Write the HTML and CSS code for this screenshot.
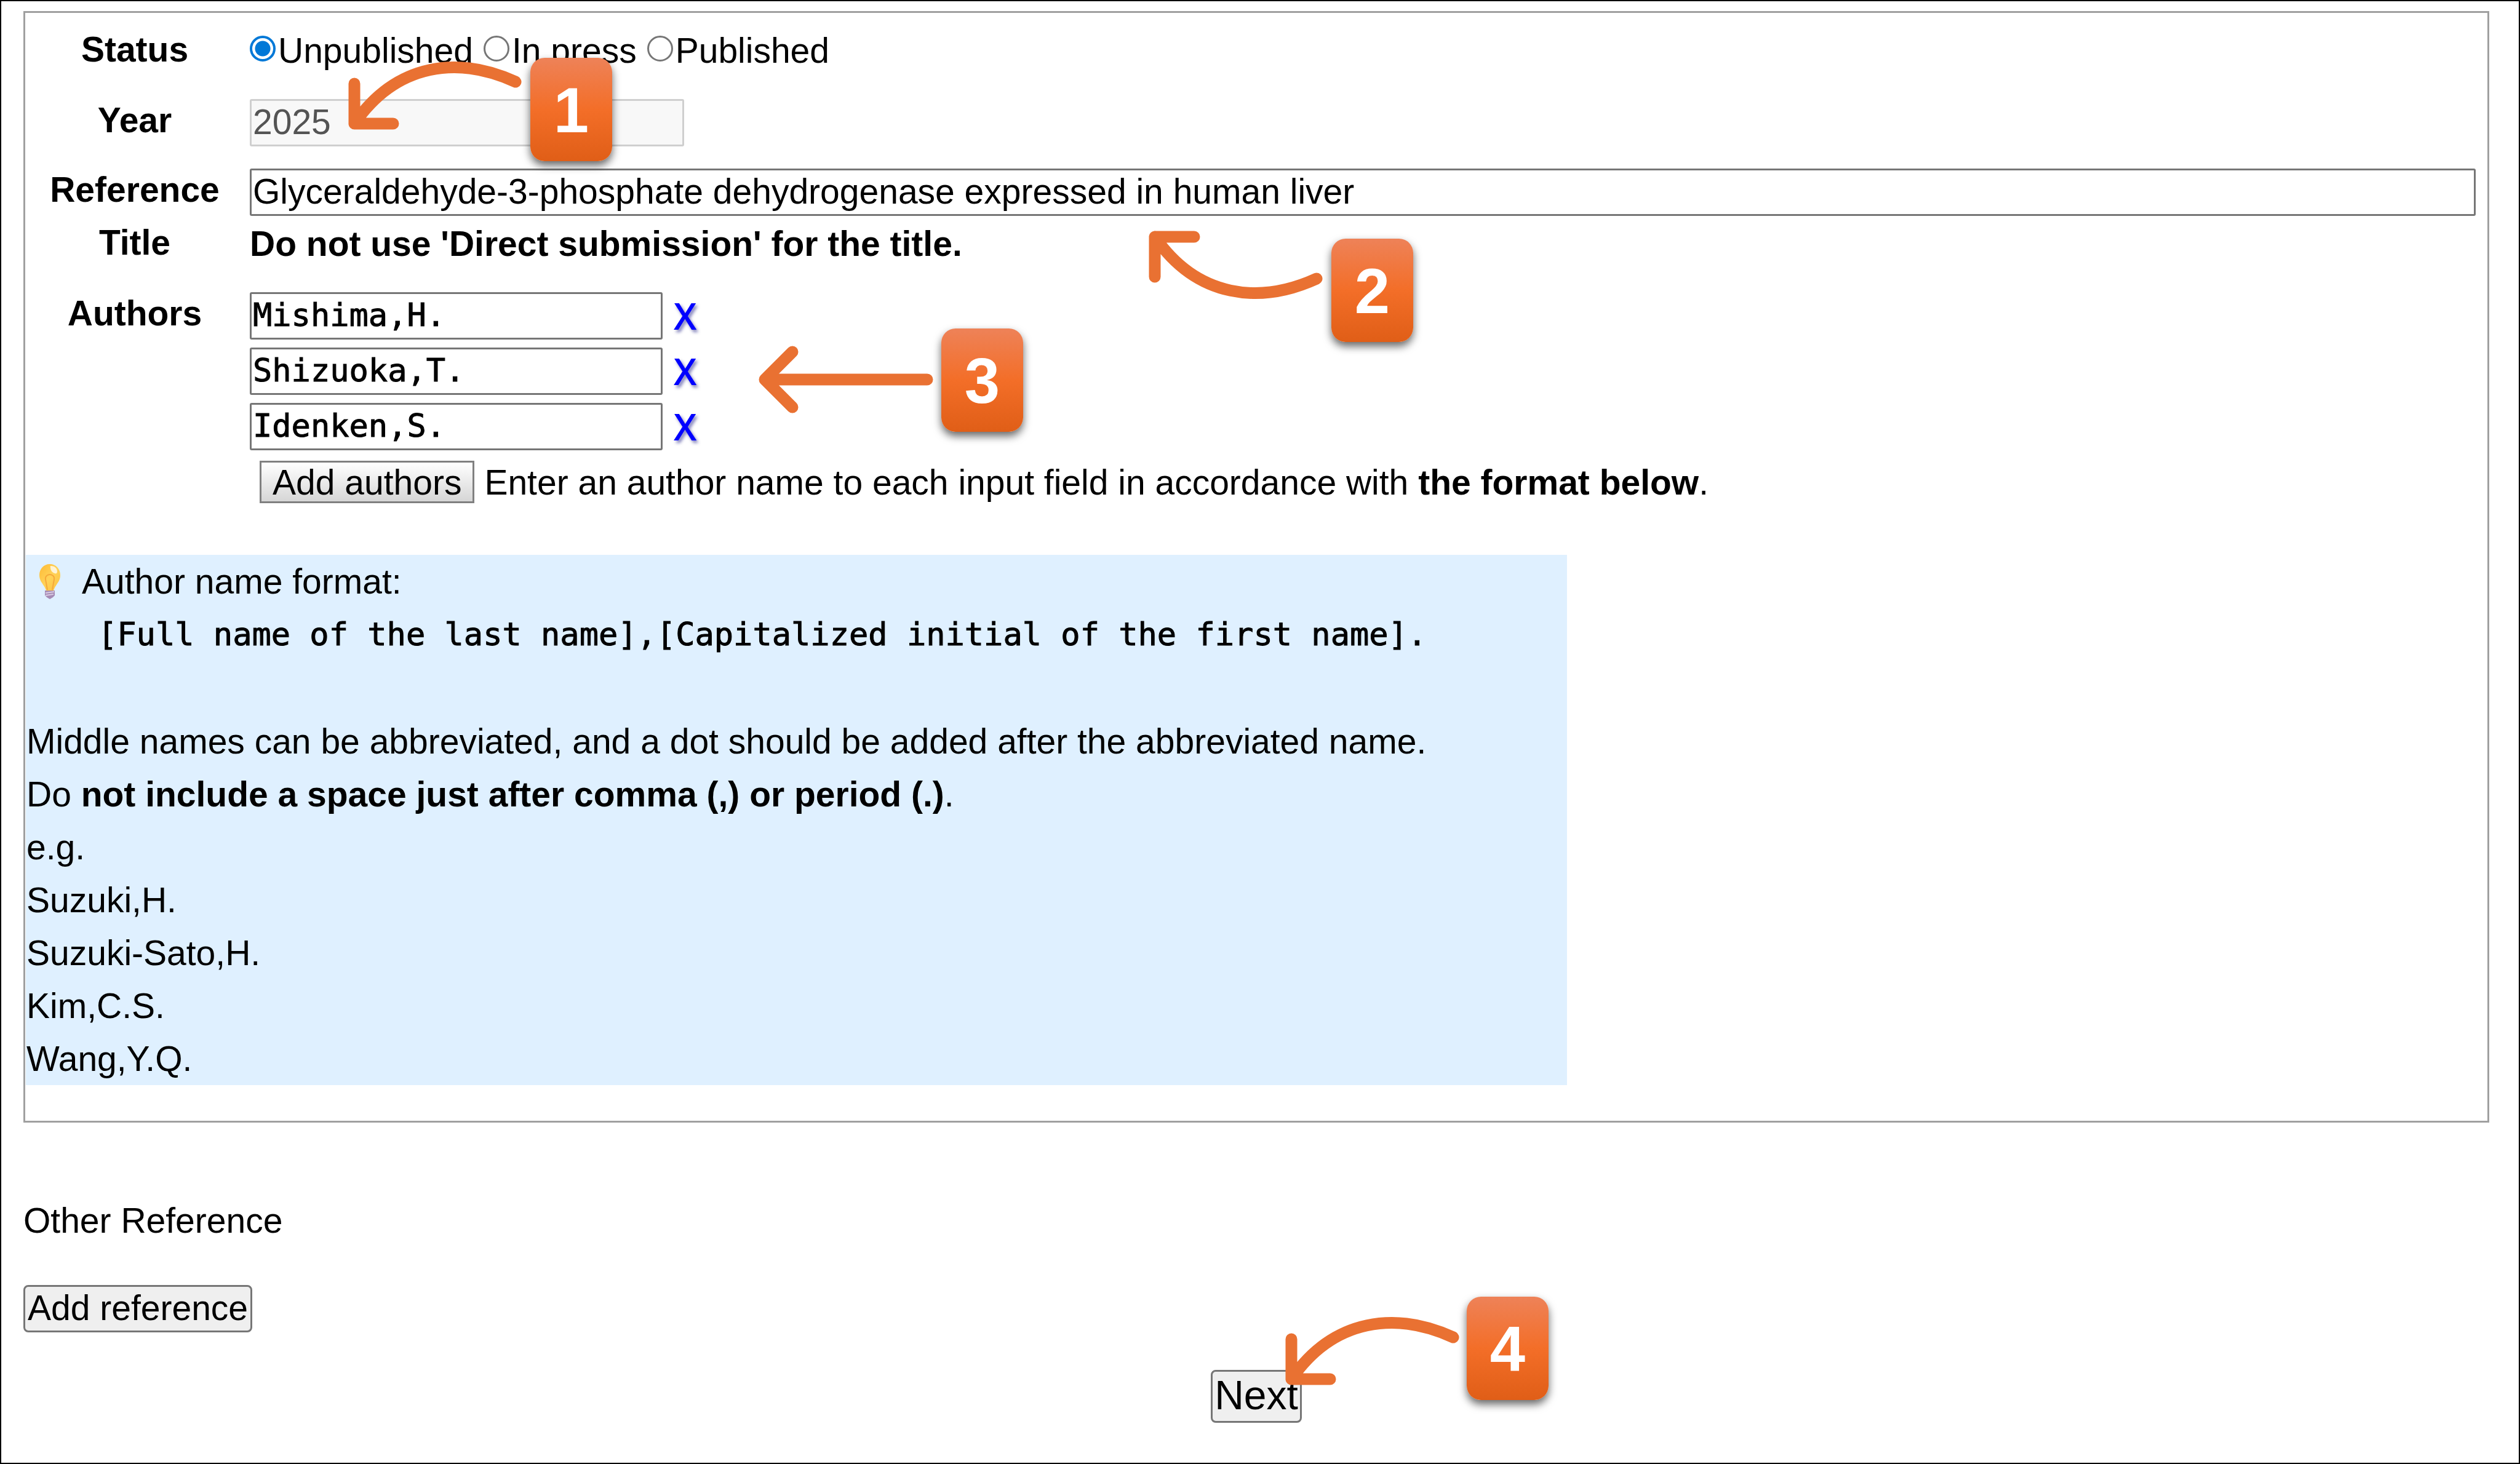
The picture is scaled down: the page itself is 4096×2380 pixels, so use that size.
FILE: index.html
```html
<!DOCTYPE html>
<html lang="en">
<head>
<meta charset="utf-8">
<title>Reference</title>
<link rel="stylesheet" href="styles.css">
</head>
<body>
<form class="page">
  <section class="panel">
    <div class="rows">
      <div class="row">
        <div class="label" id="status-label">Status</div>
        <div class="field radios" role="radiogroup" aria-labelledby="status-label">
          <label class="choice"><input type="radio" name="status" checked>Unpublished</label>
          <label class="choice"><input type="radio" name="status">In press</label>
          <label class="choice"><input type="radio" name="status">Published</label>
        </div>
      </div>
      <div class="row">
        <label class="label" for="year">Year</label>
        <div class="field"><input class="text year" id="year" type="text" value="2025" disabled></div>
      </div>
      <div class="row">
        <label class="label" for="title">Reference Title</label>
        <div class="field">
          <input class="text title" id="title" type="text" value="Glyceraldehyde-3-phosphate dehydrogenase expressed in human liver">
          <p class="line"><strong>Do not use 'Direct submission' for the title.</strong></p>
        </div>
      </div>
      <div class="row">
        <div class="label" id="authors-label">Authors</div>
        <div class="field authors" role="group" aria-labelledby="authors-label">
          <div class="author"><input class="text mono" type="text" aria-label="Author 1" value="Mishima,H."><a class="remove" href="#">X</a></div>
          <div class="author"><input class="text mono" type="text" aria-label="Author 2" value="Shizuoka,T."><a class="remove" href="#">X</a></div>
          <div class="author"><input class="text mono" type="text" aria-label="Author 3" value="Idenken,S."><a class="remove" href="#">X</a></div>
          <div class="add"><button class="add-authors" type="button">Add authors</button><span>Enter an author name to each input field in accordance with <strong>the format below</strong>.</span></div>
        </div>
      </div>
    </div>
    <div class="hint">
      <p class="line hint-title">
        <svg class="bulb" viewBox="0 0 36 58" aria-hidden="true">
          <defs>
            <linearGradient id="glass" x1="0" y1="0" x2="1" y2="1">
              <stop offset="0" stop-color="#fdb935"/><stop offset=".5" stop-color="#ffd257"/><stop offset="1" stop-color="#fcc23f"/>
            </linearGradient>
          </defs>
          <path d="M18 1C8 1 1 9 1 19c0 8 4 12 7 17 2 3 3 5 4 8h12c1-3 2-5 4-8 3-5 7-9 7-17C35 9 28 1 18 1z" fill="url(#glass)"/>
          <path d="M14 43l-3-17c-1-6 4-8 7-8s8 2 7 8l-3 17" fill="none" stroke="#f5a93a" stroke-width="2"/>
          <path d="M20 4c6 0 10 4 10 9 0 3-2 4-4 3-4-1-7-5-7-9 0-2-1-3 1-3z" fill="#fff" opacity=".75"/>
          <path d="M10 44h16v8l-3 3-5 3-5-3-3-3z" fill="#a58bb5"/>
          <path d="M11 48l14-2M11 52l13-2" stroke="#d9cbe3" stroke-width="2"/>
        </svg>
        Author name format:
      </p>
      <p class="line code">[Full name of the last name],[Capitalized initial of the first name].</p>
      <p class="line spaced">Middle names can be abbreviated, and a dot should be added after the abbreviated name.</p>
      <p class="line">Do <strong>not include a space just after comma (,) or period (.)</strong>.</p>
      <p class="line">e.g.</p>
      <p class="line">Suzuki,H.</p>
      <p class="line">Suzuki-Sato,H.</p>
      <p class="line">Kim,C.S.</p>
      <p class="line">Wang,Y.Q.</p>
    </div>
  </section>
  <p class="line other">Other Reference</p>
  <button class="plain" type="button">Add reference</button>
  <button class="plain next" type="submit">Next</button>

  <svg class="arrow arrow-1" viewBox="560 90 300 130" aria-hidden="true"><path d="M838 133C746 91 645 101 576 201M576 136V201H639"/></svg>
  <svg class="arrow arrow-2" viewBox="1860 370 300 130" aria-hidden="true"><path d="M2140 453C2048 495 1946 485 1877 385M1877 450V385H1941"/></svg>
  <svg class="arrow arrow-3" viewBox="1230 550 300 130" aria-hidden="true"><path d="M1507 617H1243M1288 572L1243 617L1288 662"/></svg>
  <svg class="arrow arrow-4" viewBox="2080 2130 300 130" aria-hidden="true"><path d="M2362 2174C2270 2132 2168 2142 2099 2242M2099 2177V2242H2162"/></svg>
  <span class="badge badge-1">1</span>
  <span class="badge badge-2">2</span>
  <span class="badge badge-3">3</span>
  <span class="badge badge-4">4</span>
</form>
</body>
</html>
```
FILE: styles.css
```css
* {
  box-sizing: border-box;
}

body {
  margin: 0;
  background: #fff;
  color: #000;
  font: 57px/86px "Liberation Sans", Arial, sans-serif;
}

.page {
  position: relative;
  min-height: 100vh;
  padding: 16px 48px 64px 36px;
  border: 2px solid #000;
}

.line {
  margin: 0;
}

.panel {
  padding: 16px 2px 58px 1px;
  border: 3px solid #a0a0a0;
}

.rows {
  display: grid;
  gap: 27px;
}

.row {
  display: grid;
  grid-template-columns: 354px 1fr;
  column-gap: 10px;
  padding-right: 17px;
}

.label {
  font-weight: bold;
  text-align: center;
}

.field {
  min-width: 0;
  padding-top: 9px;
}

.radios {
  display: flex;
  gap: 17px;
  padding-top: 2px;
}

.choice {
  display: flex;
  align-items: center;
}

.choice input {
  appearance: none;
  width: 42px;
  height: 42px;
  margin: 0 4px 6px 0;
  border: 3px solid #767676;
  border-radius: 50%;
  background: #fff;
}

.choice input:checked {
  border: 4px solid #0078d7;
  background: radial-gradient(circle, #0078d7 12px, #fff 13px);
}

.text {
  display: block;
  height: 77px;
  padding: 0 2px 3px;
  border: 3px solid #767676;
  border-radius: 3px;
  background: #fff;
  color: #000;
  font: inherit;
  line-height: 68px;
}

.year {
  width: 706px;
  border-color: #cfcfcf;
  background: #f8f8f8;
  color: #545454;
}

.title {
  width: 100%;
  margin-bottom: 2px;
}

.authors {
  display: grid;
  gap: 13px;
}

.author,
.add {
  display: flex;
  align-items: center;
  height: 77px;
}

.mono {
  width: 671px;
}

.mono,
.code {
  font-family: "DejaVu Sans Mono", monospace;
  font-size: 52px;
  -webkit-text-stroke: 1px #000;
}

.remove {
  margin-left: 18px;
  color: #00f;
  font-family: "Open Sans", "Noto Sans", sans-serif;
  font-size: 60px;
  font-weight: 600;
  line-height: 77px;
  text-decoration: none;
  text-shadow: 3px 4px 5px rgba(0, 0, 120, 0.5);
}

.add {
  gap: 16px;
  padding-left: 16px;
}

.add-authors {
  height: 69px;
  padding: 0 18px;
  border: 3px solid #808080;
  background: linear-gradient(#fff, #d6d6d6);
  color: #000;
  font: inherit;
  line-height: 62px;
}

.hint {
  width: 2505px;
  margin-top: 80px;
  padding-left: 1px;
  background: #dff0ff;
}

.hint-title {
  display: flex;
  align-items: center;
  gap: 34px;
  padding-left: 20px;
}

.bulb {
  width: 36px;
  height: 58px;
}

.code {
  padding-left: 116px;
}

.spaced {
  margin-top: 88px;
}

.other {
  margin: 116px 0 62px;
}

.plain {
  display: block;
  height: 77px;
  padding: 0 4px 3px;
  border: 3px solid #767676;
  border-radius: 8px;
  background: #efefef;
  color: #000;
  font: inherit;
  line-height: 68px;
}

.next {
  height: 86px;
  margin: 61px auto 0;
  padding: 0 3px 5px;
  font-size: 66px;
  line-height: 74px;
}

.arrow {
  position: absolute;
  width: 300px;
  height: 130px;
  overflow: visible;
  fill: none;
  stroke: #e97132;
  stroke-width: 19px;
  stroke-linecap: round;
  stroke-linejoin: round;
}

.arrow-1 { left: 558px; top: 88px; }
.arrow-2 { left: 1858px; top: 368px; }
.arrow-3 { left: 1228px; top: 548px; }
.arrow-4 { left: 2078px; top: 2128px; }

.badge {
  position: absolute;
  width: 133px;
  height: 168px;
  padding-top: 4px;
  border-radius: 23px;
  background: linear-gradient(#ee8258, #f36e28 50%, #e05e17);
  box-shadow: 0 7px 14px rgba(0, 0, 0, 0.6);
  color: #fff;
  font-size: 103px;
  font-weight: bold;
  line-height: 164px;
  text-align: center;
}

.badge-1 { left: 860px; top: 92px; }
.badge-2 { left: 2162px; top: 386px; }
.badge-3 { left: 1528px; top: 532px; }
.badge-4 { left: 2382px; top: 2106px; }
```
